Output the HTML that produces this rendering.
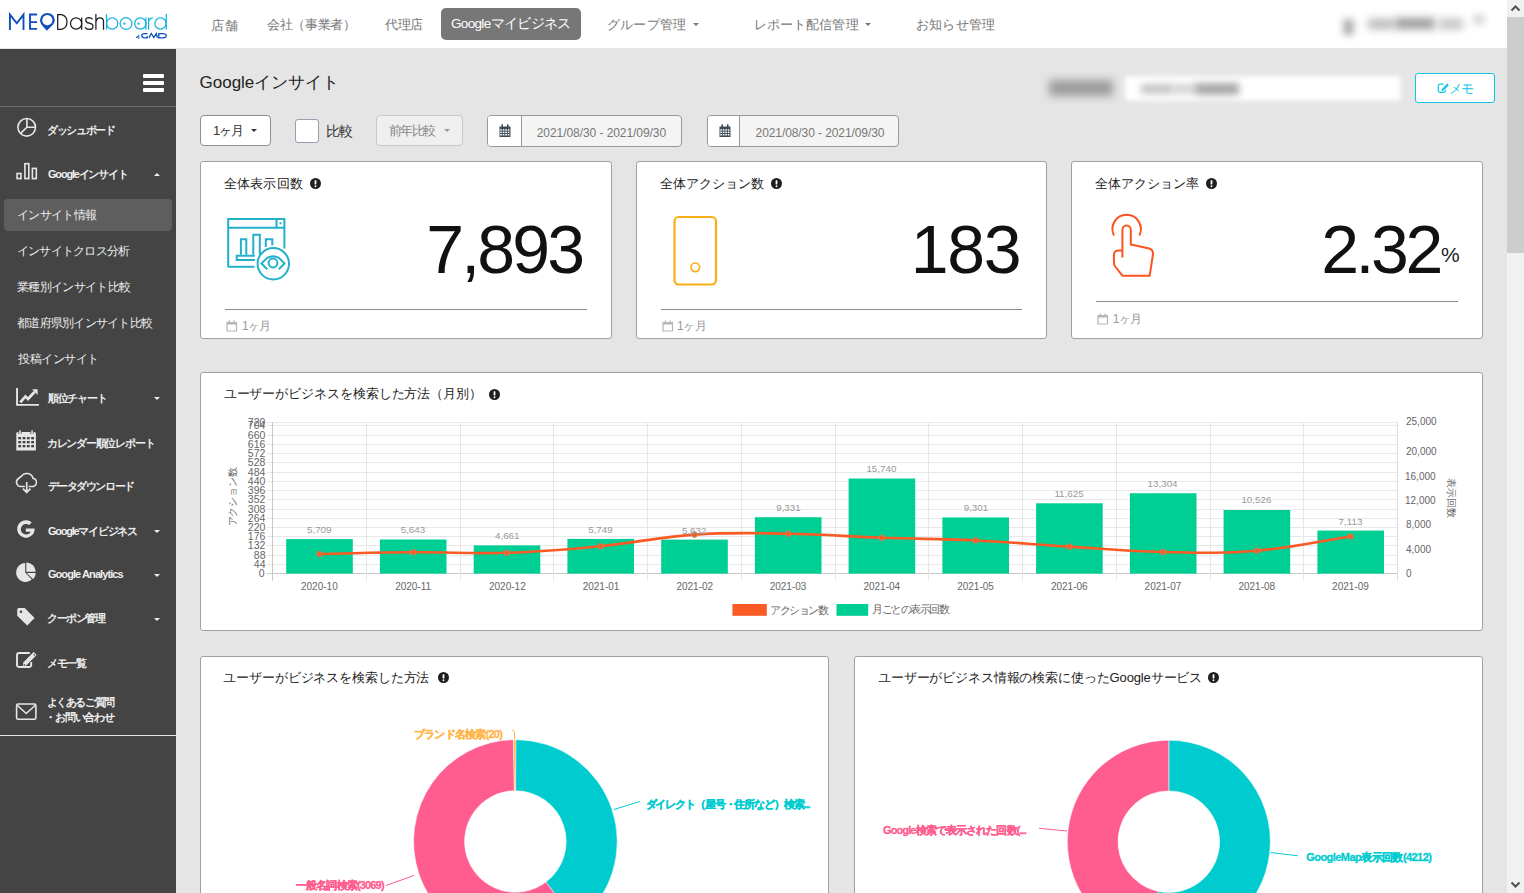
<!DOCTYPE html>
<html><head><meta charset="utf-8"><title>MEO Dashboard</title>
<style>
*{box-sizing:border-box;margin:0;padding:0}
html,body{width:1524px;height:893px;overflow:hidden;background:#e5e5e5;font-family:"Liberation Sans",sans-serif;position:relative}
.a{position:absolute;white-space:nowrap}
</style></head><body>
<div class="a" style="left:0;top:0;width:1507px;height:48px;background:#fff"></div>
<div class="a" style="left:441px;top:8px;width:140px;height:32px;background:#777;border-radius:5px"></div>
<div class="a" style="left:693px;top:23px;width:0;height:0;border-left:3px solid transparent;border-right:3px solid transparent;border-top:3px solid #777"></div>
<div class="a" style="left:865px;top:23px;width:0;height:0;border-left:3px solid transparent;border-right:3px solid transparent;border-top:3px solid #777"></div>
<div class="a" style="left:1343px;top:19px;width:11px;height:16px;background:#999;filter:blur(3.5px);opacity:.75"></div>
<div class="a" style="left:1368px;top:19px;width:26px;height:10px;background:#b8b8b8;filter:blur(4px)"></div>
<div class="a" style="left:1395px;top:18px;width:40px;height:11px;background:#9a9a9a;filter:blur(4px)"></div>
<div class="a" style="left:1439px;top:19px;width:24px;height:10px;background:#c0c0c0;filter:blur(4px)"></div>
<div class="a" style="left:1473px;top:14px;width:12px;height:11px;background:#ddd;filter:blur(3px)"></div>
<div class="a" style="left:0;top:48px;width:176px;height:1px;background:#e5e5e5"></div>
<div class="a" style="left:0;top:49px;width:176px;height:844px;background:#444"></div>
<div class="a" style="left:0;top:106px;width:176px;height:1px;background:#6b6e71"></div>
<div class="a" style="left:143px;top:74px;width:21px;height:4px;background:#fff;border-radius:1px"></div>
<div class="a" style="left:143px;top:81px;width:21px;height:4px;background:#fff;border-radius:1px"></div>
<div class="a" style="left:143px;top:88px;width:21px;height:4px;background:#fff;border-radius:1px"></div>
<div class="a" style="left:4px;top:199px;width:168px;height:32px;background:#5e5e5e;border-radius:4px"></div>
<div class="a" style="left:0;top:735px;width:176px;height:1px;background:#e5e5e5"></div>
<div class="a" style="left:154px;top:173px;width:0;height:0;border-left:3px solid transparent;border-right:3px solid transparent;border-bottom:3px solid #eee"></div>
<div class="a" style="left:154px;top:397px;width:0;height:0;border-left:3px solid transparent;border-right:3px solid transparent;border-top:3px solid #eee"></div>
<div class="a" style="left:154px;top:530px;width:0;height:0;border-left:3px solid transparent;border-right:3px solid transparent;border-top:3px solid #eee"></div>
<div class="a" style="left:154px;top:574px;width:0;height:0;border-left:3px solid transparent;border-right:3px solid transparent;border-top:3px solid #eee"></div>
<div class="a" style="left:154px;top:618px;width:0;height:0;border-left:3px solid transparent;border-right:3px solid transparent;border-top:3px solid #eee"></div>
<svg class="a" style="left:0;top:0" width="176" height="893" viewBox="0 0 176 893">
<g fill="none" stroke="#e6e6e6" stroke-width="1.6">
 <circle cx="26.7" cy="127.3" r="8.8"/>
 <path d="M26.9 118.5V127.3H35.5M26.9 127.3L20.6 133.4"/>
 <rect x="17.1" y="173.5" width="3.9" height="5.1"/><rect x="24.9" y="163.7" width="3.9" height="14.9"/><rect x="32.4" y="168.4" width="3.9" height="10.2"/>
 <path d="M17.05 388V404.9H38.9" stroke-width="1.9"/>
 <path d="M20.3 402.3L25.4 396.4L28 399L34.5 392" stroke-width="2.7" stroke-linejoin="miter"/>
 <path d="M21.6 486.5H20.8A4.3 4.3 0 0 1 18.6 478.5A8 8 0 0 1 21.5 476.2A6.4 6.4 0 0 1 33 478.3A4.2 4.2 0 0 1 33.2 486.5H28.6M24.8 486.5H21.6" stroke-width="1.5"/>
 <path d="M26.7 482V492.3M22.9 488.6L26.7 492.3L30.5 488.6" stroke-width="1.7"/>
 <path d="M29.8 653H19.1A2.1 2.1 0 0 0 17 655.1V664.9A2.1 2.1 0 0 0 19.1 667H29.1A2.1 2.1 0 0 0 31.2 664.9V662" stroke-width="1.9"/>
 <rect x="16.6" y="704" width="19.3" height="15.2" rx="1.5"/>
 <path d="M17 705L26.2 713.5L35.5 705"/>
</g>
<g fill="#e6e6e6">
 <path d="M32.1 389.3H37.6V394.9Z"/>
 <path d="M16.3 433.5a1.5 1.5 0 0 1 1.5-1.5H34.4a1.5 1.5 0 0 1 1.5 1.5V450.5H16.3Z"/>
 <path d="M33.6 652.1L36.6 655.1L26.2 665.5L22.8 666.3L23.3 662.5Z"/>
 <path d="M25.8 528.5H34.6A8.7 8.7 0 1 1 31.7 522.5L29.2 525A5.3 5.3 0 1 0 30.8 531.7H25.8Z"/>
 <path d="M25.2 563.1V572.6L31.8 579.5A9.4 9.4 0 1 1 25.2 563.1Z"/>
 <path d="M26.3 562.4A9.4 9.4 0 0 1 35.7 571.8H26.3Z"/>
 <path d="M26.8 572.9H35.7A9 9 0 0 1 33.2 579.3Z"/>
 <path d="M17.2 609.2V615.7L27.2 625.5L34.6 618L24.7 608H18.4Z"/>
</g>
<g fill="#444">
 <circle cx="21" cy="611.7" r="1.3"/>
 <path d="M33.9 653.9L35.3 655.3L34.6 656L33.2 654.6Z"/>
 <circle cx="24.3" cy="664.9" r=".8"/>
 <rect x="18.3" y="437" width="2.8" height="2.3"/><rect x="22.6" y="437" width="2.8" height="2.3"/><rect x="26.9" y="437" width="2.8" height="2.3"/><rect x="31.2" y="437" width="2.8" height="2.3"/>
 <rect x="18.3" y="441" width="2.8" height="2.3"/><rect x="22.6" y="441" width="2.8" height="2.3"/><rect x="26.9" y="441" width="2.8" height="2.3"/><rect x="31.2" y="441" width="2.8" height="2.3"/>
 <rect x="18.3" y="445" width="2.8" height="2.3"/><rect x="22.6" y="445" width="2.8" height="2.3"/><rect x="26.9" y="445" width="2.8" height="2.3"/><rect x="31.2" y="445" width="2.8" height="2.3"/>
 <rect x="18.5" y="430.2" width="3" height="3.8"/><rect x="30.5" y="430.2" width="3" height="3.8"/>
</g>
<g fill="#e6e6e6"><rect x="19.3" y="430.3" width="1.5" height="4"/><rect x="31.3" y="430.3" width="1.5" height="4"/></g>
</svg>
<div class="a" style="left:176px;top:48px;width:1331px;height:845px;background:#e5e5e5"></div>
<div class="a" style="left:1507px;top:0;width:17px;height:893px;background:#f1f1f1"></div>
<div class="a" style="left:1507px;top:17px;width:17px;height:236px;background:#cdcdcd"></div>
<svg class="a" style="left:1507px;top:0" width="17" height="893"><path d="M4.5 10.5L8.5 6.5L12.5 10.5" fill="none" stroke="#505050" stroke-width="2"/><path d="M4.5 882.5L8.5 886.5L12.5 882.5" fill="none" stroke="#505050" stroke-width="2"/></svg>
<div class="a" style="left:1049px;top:80px;width:64px;height:16px;background:#8a8a8a;filter:blur(4px);opacity:.8"></div>
<div class="a" style="left:1124px;top:75px;width:278px;height:27px;background:#fff;border:1px solid #d8d8d8;border-radius:3px;filter:blur(2.5px)"></div>
<div class="a" style="left:1141px;top:84px;width:32px;height:10px;background:#c4c4c4;filter:blur(3.5px)"></div>
<div class="a" style="left:1172px;top:84px;width:24px;height:10px;background:#d4d4d4;filter:blur(3.5px)"></div>
<div class="a" style="left:1195px;top:83px;width:44px;height:12px;background:#a8a8a8;filter:blur(3.5px)"></div>
<div class="a" style="left:1415px;top:73px;width:80px;height:30px;background:#fff;border:1px solid #0cc6e6;border-radius:3px"></div>
<svg class="a" style="left:1437px;top:83px" width="13" height="11"><path d="M6.5 1.2H3A1.7 1.7 0 0 0 1.3 2.9V7.6A1.7 1.7 0 0 0 3 9.3H6.7A1.7 1.7 0 0 0 8.4 7.6V6.8" fill="none" stroke="#0cc6e6" stroke-width="1.2"/><path d="M10.2 0.6L11.8 2.2L6.5 7.5L4.4 8.2L5 6Z" fill="#0cc6e6"/></svg>
<div class="a" style="left:200px;top:115px;width:71px;height:31px;background:#fff;border:1px solid #8f8f8f;border-radius:4px"></div>
<div class="a" style="left:251px;top:129px;width:0;height:0;border-left:3px solid transparent;border-right:3px solid transparent;border-top:3px solid #333"></div>
<div class="a" style="left:295px;top:119px;width:24px;height:24px;background:#fff;border:1px solid #9c9cb0;border-radius:3px"></div>
<div class="a" style="left:376px;top:115px;width:87px;height:31px;background:#efefef;border:1px solid #c8c8c8;border-radius:4px"></div>
<div class="a" style="left:443.5px;top:129px;width:0;height:0;border-left:3px solid transparent;border-right:3px solid transparent;border-top:3px solid #999"></div>
<div class="a" style="left:487px;top:115px;width:195px;height:32px;background:#f4f4f4;border:1px solid #999;border-radius:4px;overflow:hidden"><div style="position:absolute;left:0;top:0;width:34.39999999999998px;height:30px;background:#fff;border-right:1px solid #999"></div></div>
<svg class="a" style="left:499px;top:124px" width="12" height="14"><path d="M0.5 2.5H11.5V13H0.5Z" fill="#3d4b57"/><g fill="#fff"><rect x="1.3" y="5.2" width="1.6" height="1.5"/><rect x="3.8" y="5.2" width="1.6" height="1.5"/><rect x="6.3" y="5.2" width="1.6" height="1.5"/><rect x="8.8" y="5.2" width="1.6" height="1.5"/><rect x="1.3" y="7.6" width="1.6" height="1.5"/><rect x="3.8" y="7.6" width="1.6" height="1.5"/><rect x="6.3" y="7.6" width="1.6" height="1.5"/><rect x="8.8" y="7.6" width="1.6" height="1.5"/><rect x="1.3" y="10.0" width="1.6" height="1.5"/><rect x="3.8" y="10.0" width="1.6" height="1.5"/><rect x="6.3" y="10.0" width="1.6" height="1.5"/><rect x="8.8" y="10.0" width="1.6" height="1.5"/></g><rect x="2.5" y="0.3" width="1.5" height="3.5" fill="#3d4b57"/><rect x="8" y="0.3" width="1.5" height="3.5" fill="#3d4b57"/></svg>
<div class="a" style="left:706.6px;top:115px;width:192.89999999999998px;height:32px;background:#f4f4f4;border:1px solid #999;border-radius:4px;overflow:hidden"><div style="position:absolute;left:0;top:0;width:32.799999999999955px;height:30px;background:#fff;border-right:1px solid #999"></div></div>
<svg class="a" style="left:718.6px;top:124px" width="12" height="14"><path d="M0.5 2.5H11.5V13H0.5Z" fill="#3d4b57"/><g fill="#fff"><rect x="1.3" y="5.2" width="1.6" height="1.5"/><rect x="3.8" y="5.2" width="1.6" height="1.5"/><rect x="6.3" y="5.2" width="1.6" height="1.5"/><rect x="8.8" y="5.2" width="1.6" height="1.5"/><rect x="1.3" y="7.6" width="1.6" height="1.5"/><rect x="3.8" y="7.6" width="1.6" height="1.5"/><rect x="6.3" y="7.6" width="1.6" height="1.5"/><rect x="8.8" y="7.6" width="1.6" height="1.5"/><rect x="1.3" y="10.0" width="1.6" height="1.5"/><rect x="3.8" y="10.0" width="1.6" height="1.5"/><rect x="6.3" y="10.0" width="1.6" height="1.5"/><rect x="8.8" y="10.0" width="1.6" height="1.5"/></g><rect x="2.5" y="0.3" width="1.5" height="3.5" fill="#3d4b57"/><rect x="8" y="0.3" width="1.5" height="3.5" fill="#3d4b57"/></svg>
<div class="a" style="left:200px;top:161px;width:412px;height:178px;background:#fff;border:1px solid #a0a0a0;border-radius:3px"></div>
<div class="a" style="left:636px;top:161px;width:411px;height:178px;background:#fff;border:1px solid #a0a0a0;border-radius:3px"></div>
<div class="a" style="left:1071px;top:161px;width:411.5px;height:178px;background:#fff;border:1px solid #a0a0a0;border-radius:3px"></div>
<svg class="a" style="left:309.5px;top:178px" width="11" height="11"><circle cx="5.5" cy="5.5" r="5.5" fill="#1e1e1e"/><rect x="4.6" y="2.2" width="1.8" height="4.4" rx=".6" fill="#fff"/><circle cx="5.5" cy="8.3" r=".95" fill="#fff"/></svg>
<svg class="a" style="left:770.5px;top:178px" width="11" height="11"><circle cx="5.5" cy="5.5" r="5.5" fill="#1e1e1e"/><rect x="4.6" y="2.2" width="1.8" height="4.4" rx=".6" fill="#fff"/><circle cx="5.5" cy="8.3" r=".95" fill="#fff"/></svg>
<svg class="a" style="left:1206px;top:178px" width="11" height="11"><circle cx="5.5" cy="5.5" r="5.5" fill="#1e1e1e"/><rect x="4.6" y="2.2" width="1.8" height="4.4" rx=".6" fill="#fff"/><circle cx="5.5" cy="8.3" r=".95" fill="#fff"/></svg>
<div class="a" style="left:225px;top:309px;width:362px;height:1px;background:#8a8a8a"></div>
<div class="a" style="left:661px;top:309px;width:361px;height:1px;background:#8a8a8a"></div>
<div class="a" style="left:1096px;top:301px;width:362px;height:1px;background:#8a8a8a"></div>
<svg class="a" style="left:226px;top:320px" width="12" height="12"><path d="M1 2.5H10.5V11H1Z" fill="none" stroke="#b5b5b5" stroke-width="1.2"/><rect x="1" y="2.5" width="9.5" height="2" fill="#b5b5b5"/><rect x="2.8" y=".3" width="1.2" height="2.5" fill="#b5b5b5"/><rect x="7.5" y=".3" width="1.2" height="2.5" fill="#b5b5b5"/></svg>
<svg class="a" style="left:661.5px;top:320px" width="12" height="12"><path d="M1 2.5H10.5V11H1Z" fill="none" stroke="#b5b5b5" stroke-width="1.2"/><rect x="1" y="2.5" width="9.5" height="2" fill="#b5b5b5"/><rect x="2.8" y=".3" width="1.2" height="2.5" fill="#b5b5b5"/><rect x="7.5" y=".3" width="1.2" height="2.5" fill="#b5b5b5"/></svg>
<svg class="a" style="left:1097px;top:313px" width="12" height="12"><path d="M1 2.5H10.5V11H1Z" fill="none" stroke="#b5b5b5" stroke-width="1.2"/><rect x="1" y="2.5" width="9.5" height="2" fill="#b5b5b5"/><rect x="2.8" y=".3" width="1.2" height="2.5" fill="#b5b5b5"/><rect x="7.5" y=".3" width="1.2" height="2.5" fill="#b5b5b5"/></svg>
<svg class="a" style="left:220px;top:210px" width="80" height="80" viewBox="0 0 80 80"><g fill="none" stroke="#22b0cb" stroke-width="2">
<path d="M8.2 57V9.1H64.4V38.5"/><path d="M8.2 56.8H34.5"/><path d="M8.2 17.7H64.4"/><path d="M56.5 9.5V17.5"/>
<path d="M20.9 44.8V29.2H26.3V44.8M33.3 44.8V24.7H39.8V44.8M45.8 37V29.2H52.3V35.2"/>
<path d="M34.8 45.8H16.7V50H34.8"/>
<circle cx="53.3" cy="53.8" r="15.7"/>
<path d="M47.2 59.3L41.5 53.4L47.2 47.8Q53 44.5 58.8 47.8L64.5 53.4L58.8 59.3" />
<circle cx="53" cy="53" r="4.4"/>
</g><rect x="59.5" y="12.3" width="2" height="2" fill="#22b0cb"/></svg>
<svg class="a" style="left:665px;top:205px" width="65" height="85"><g fill="none" stroke="#fbad18" stroke-width="2.2">
<rect x="9.5" y="12" width="41.5" height="67.5" rx="4.2"/><circle cx="30.3" cy="62.3" r="4.3" stroke-width="1.7"/></g></svg>
<svg class="a" style="left:1100px;top:205px" width="65" height="85"><g fill="none" stroke="#fc5420" stroke-width="2" stroke-linejoin="round">
<path d="M14 30.5A14.2 14.2 0 1 1 39.3 30.5"/>
<path d="M22.4 52.4V24.6A4.2 4.2 0 0 1 30.8 24.6V39.4L49.3 43.5Q53.2 44.8 53 49L49.7 70.7H22.4L14.8 61Q13.7 59 13.9 54V49.5Q14.5 45.5 18.5 45.5H22.3"/>
</g></svg>
<div class="a" style="left:200px;top:371.5px;width:1282.5px;height:259.0px;background:#fff;border:1px solid #a0a0a0;border-radius:3px"></div>
<svg class="a" style="left:488.5px;top:388.5px" width="11" height="11"><circle cx="5.5" cy="5.5" r="5.5" fill="#1e1e1e"/><rect x="4.6" y="2.2" width="1.8" height="4.4" rx=".6" fill="#fff"/><circle cx="5.5" cy="8.3" r=".95" fill="#fff"/></svg>
<svg class="a" style="left:0;top:0" width="1524" height="893">
<line x1="266.6" y1="573.5" x2="1397.5" y2="573.5" stroke="#c8c8c8" stroke-width="1"/>
<line x1="266.6" y1="564.5" x2="1397.5" y2="564.5" stroke="#e8e8e8" stroke-width="1"/>
<line x1="266.6" y1="555.5" x2="1397.5" y2="555.5" stroke="#e8e8e8" stroke-width="1"/>
<line x1="266.6" y1="545.5" x2="1397.5" y2="545.5" stroke="#e8e8e8" stroke-width="1"/>
<line x1="266.6" y1="536.5" x2="1397.5" y2="536.5" stroke="#e8e8e8" stroke-width="1"/>
<line x1="266.6" y1="527.5" x2="1397.5" y2="527.5" stroke="#e8e8e8" stroke-width="1"/>
<line x1="266.6" y1="518.5" x2="1397.5" y2="518.5" stroke="#e8e8e8" stroke-width="1"/>
<line x1="266.6" y1="509.5" x2="1397.5" y2="509.5" stroke="#e8e8e8" stroke-width="1"/>
<line x1="266.6" y1="499.5" x2="1397.5" y2="499.5" stroke="#e8e8e8" stroke-width="1"/>
<line x1="266.6" y1="490.5" x2="1397.5" y2="490.5" stroke="#e8e8e8" stroke-width="1"/>
<line x1="266.6" y1="481.5" x2="1397.5" y2="481.5" stroke="#e8e8e8" stroke-width="1"/>
<line x1="266.6" y1="472.5" x2="1397.5" y2="472.5" stroke="#e8e8e8" stroke-width="1"/>
<line x1="266.6" y1="462.5" x2="1397.5" y2="462.5" stroke="#e8e8e8" stroke-width="1"/>
<line x1="266.6" y1="453.5" x2="1397.5" y2="453.5" stroke="#e8e8e8" stroke-width="1"/>
<line x1="266.6" y1="444.5" x2="1397.5" y2="444.5" stroke="#e8e8e8" stroke-width="1"/>
<line x1="266.6" y1="435.5" x2="1397.5" y2="435.5" stroke="#e8e8e8" stroke-width="1"/>
<line x1="266.6" y1="425.5" x2="1397.5" y2="425.5" stroke="#e8e8e8" stroke-width="1"/>
<line x1="266.6" y1="422.5" x2="1397.5" y2="422.5" stroke="#e8e8e8" stroke-width="1"/>
<line x1="272.5" y1="422.5" x2="272.5" y2="580.6" stroke="#c8c8c8" stroke-width="1"/>
<line x1="366.5" y1="422.5" x2="366.5" y2="580.6" stroke="#e6e6e6" stroke-width="1"/>
<line x1="460.5" y1="422.5" x2="460.5" y2="580.6" stroke="#e6e6e6" stroke-width="1"/>
<line x1="553.5" y1="422.5" x2="553.5" y2="580.6" stroke="#e6e6e6" stroke-width="1"/>
<line x1="647.5" y1="422.5" x2="647.5" y2="580.6" stroke="#e6e6e6" stroke-width="1"/>
<line x1="741.5" y1="422.5" x2="741.5" y2="580.6" stroke="#e6e6e6" stroke-width="1"/>
<line x1="835.5" y1="422.5" x2="835.5" y2="580.6" stroke="#e6e6e6" stroke-width="1"/>
<line x1="928.5" y1="422.5" x2="928.5" y2="580.6" stroke="#e6e6e6" stroke-width="1"/>
<line x1="1022.5" y1="422.5" x2="1022.5" y2="580.6" stroke="#e6e6e6" stroke-width="1"/>
<line x1="1116.5" y1="422.5" x2="1116.5" y2="580.6" stroke="#e6e6e6" stroke-width="1"/>
<line x1="1210.5" y1="422.5" x2="1210.5" y2="580.6" stroke="#e6e6e6" stroke-width="1"/>
<line x1="1303.5" y1="422.5" x2="1303.5" y2="580.6" stroke="#e6e6e6" stroke-width="1"/>
<line x1="1397.5" y1="422.5" x2="1397.5" y2="580.6" stroke="#dcdcdc" stroke-width="1"/>
<rect x="286.2" y="539.1" width="66.6" height="34.5" fill="#00cf95"/>
<rect x="379.9" y="539.5" width="66.6" height="34.1" fill="#00cf95"/>
<rect x="473.7" y="545.4" width="66.6" height="28.2" fill="#00cf95"/>
<rect x="567.4" y="538.9" width="66.6" height="34.7" fill="#00cf95"/>
<rect x="661.2" y="539.6" width="66.6" height="34.0" fill="#00cf95"/>
<rect x="754.9" y="517.2" width="66.6" height="56.4" fill="#00cf95"/>
<rect x="848.6" y="478.5" width="66.6" height="95.1" fill="#00cf95"/>
<rect x="942.4" y="517.4" width="66.6" height="56.2" fill="#00cf95"/>
<rect x="1036.1" y="503.3" width="66.6" height="70.3" fill="#00cf95"/>
<rect x="1129.9" y="493.2" width="66.6" height="80.4" fill="#00cf95"/>
<rect x="1223.6" y="510.0" width="66.6" height="63.6" fill="#00cf95"/>
<rect x="1317.4" y="530.6" width="66.6" height="43.0" fill="#00cf95"/>
<path d="M319.5 554.0 C357.0 553.3 375.7 552.5 413.2 552.3 C450.7 552.1 469.5 554.0 507.0 552.8 C544.5 551.6 563.3 549.8 600.7 546.2 C638.3 542.6 656.8 537.1 694.4 534.6 C731.8 532.1 750.7 533.1 788.2 533.7 C825.7 534.3 844.4 536.4 881.9 537.8 C919.4 539.2 938.2 538.7 975.7 540.5 C1013.2 542.3 1031.9 544.3 1069.4 546.6 C1106.9 548.9 1125.6 551.2 1163.1 552.0 C1200.6 552.8 1219.6 553.8 1256.9 550.7 C1294.6 547.6 1313.1 542.2 1350.6 536.5" fill="none" stroke="#fa5a24" stroke-width="2.6"/>
<circle cx="319.5" cy="554.0" r="2.8" fill="#f0602a" stroke="#c9885a" stroke-width="1"/>
<circle cx="413.2" cy="552.3" r="2.8" fill="#f0602a" stroke="#c9885a" stroke-width="1"/>
<circle cx="507.0" cy="552.8" r="2.8" fill="#f0602a" stroke="#c9885a" stroke-width="1"/>
<circle cx="600.7" cy="546.2" r="2.8" fill="#f0602a" stroke="#c9885a" stroke-width="1"/>
<circle cx="694.4" cy="534.6" r="2.8" fill="#f0602a" stroke="#c9885a" stroke-width="1"/>
<circle cx="788.2" cy="533.7" r="2.8" fill="#f0602a" stroke="#c9885a" stroke-width="1"/>
<circle cx="881.9" cy="537.8" r="2.8" fill="#f0602a" stroke="#c9885a" stroke-width="1"/>
<circle cx="975.7" cy="540.5" r="2.8" fill="#f0602a" stroke="#c9885a" stroke-width="1"/>
<circle cx="1069.4" cy="546.6" r="2.8" fill="#f0602a" stroke="#c9885a" stroke-width="1"/>
<circle cx="1163.1" cy="552.0" r="2.8" fill="#f0602a" stroke="#c9885a" stroke-width="1"/>
<circle cx="1256.9" cy="550.7" r="2.8" fill="#f0602a" stroke="#c9885a" stroke-width="1"/>
<circle cx="1350.6" cy="536.5" r="2.8" fill="#f0602a" stroke="#c9885a" stroke-width="1"/>
<rect x="732.4" y="604" width="34.4" height="11.8" fill="#fa5a24"/><rect x="836.5" y="604" width="31.7" height="11.8" fill="#00cf95"/>
</svg>
<div class="a" style="left:233.3px;top:497.2px;transform:translate(-50%,-50%) rotate(-90deg);font-size:10px;color:#666;letter-spacing:-0.2px">アクション数</div>
<div class="a" style="left:1451px;top:498px;transform:translate(-50%,-50%) rotate(90deg);font-size:10px;color:#666;letter-spacing:-0.1px">表示回数</div>
<div class="a" style="left:200px;top:655.5px;width:628.5px;height:244.5px;background:#fff;border:1px solid #a0a0a0;border-radius:3px"></div>
<div class="a" style="left:853.5px;top:655.5px;width:629.0px;height:244.5px;background:#fff;border:1px solid #a0a0a0;border-radius:3px"></div>
<svg class="a" style="left:437.5px;top:672px" width="11" height="11"><circle cx="5.5" cy="5.5" r="5.5" fill="#1e1e1e"/><rect x="4.6" y="2.2" width="1.8" height="4.4" rx=".6" fill="#fff"/><circle cx="5.5" cy="8.3" r=".95" fill="#fff"/></svg>
<svg class="a" style="left:1208px;top:672px" width="11" height="11"><circle cx="5.5" cy="5.5" r="5.5" fill="#1e1e1e"/><rect x="4.6" y="2.2" width="1.8" height="4.4" rx=".6" fill="#fff"/><circle cx="5.5" cy="8.3" r=".95" fill="#fff"/></svg>
<svg class="a" style="left:0;top:0" width="1524" height="893"><path d="M515.40 739.70 A101.8 101.8 0 0 1 576.66 922.80 L545.97 882.07 A50.8 50.8 0 0 0 515.40 790.70Z" fill="#00ccd0" stroke="#fff" stroke-width="0.5"/><path d="M576.66 922.80 A101.8 101.8 0 1 1 513.45 739.72 L514.42 790.71 A50.8 50.8 0 1 0 545.97 882.07Z" fill="#ff5d8f" stroke="#fff" stroke-width="0.5"/><path d="M513.45 739.72 A101.8 101.8 0 0 1 515.93 739.70 L515.67 790.70 A50.8 50.8 0 0 0 514.42 790.71Z" fill="#ffb74d" stroke="#fff" stroke-width="0.5"/><path d="M1168.80 740.20 A101.5 101.5 0 1 1 1147.70 940.98 L1158.24 891.39 A50.8 50.8 0 1 0 1168.80 790.90Z" fill="#00ccd0" stroke="#fff" stroke-width="0.5"/><path d="M1147.70 940.98 A101.5 101.5 0 0 1 1168.80 740.20 L1168.80 790.90 A50.8 50.8 0 0 0 1158.24 891.39Z" fill="#ff5d8f" stroke="#fff" stroke-width="0.5"/><path d="M514.5 739V731.5Q514.5 730.5 512 730.5" fill="none" stroke="#ffb74d" stroke-width="1"/><path d="M614 809.5L640 801.5" fill="none" stroke="#00ccd0" stroke-width="1"/><path d="M386 885.5L414 875.5" fill="none" stroke="#ff5d8f" stroke-width="1"/><path d="M1039 828.3L1067 831" fill="none" stroke="#ff5d8f" stroke-width="1"/><path d="M1270.5 852.5L1298 855.8" fill="none" stroke="#00ccd0" stroke-width="1"/></svg>
<svg class="a" style="left:0;top:0" width="180" height="48"><g fill="none" stroke="#0e4fc0" stroke-width="1.9" stroke-linejoin="miter">
<path d="M9.9 29.9V14.6L16.8 23.3L23.5 14.6V29.9"/>
<path d="M37.1 14.5H30V28.9H37.1M30 22.1H37"/>
</g>
<path d="M47.4 12.9A7.4 7.4 0 0 0 40 20.3C40 24 44.2 27.8 46.9 30.8C49.8 27.8 54.8 24 54.8 20.3A7.4 7.4 0 0 0 47.4 12.9ZM47.4 15.1A5.1 5.1 0 1 1 47.3 15.1Z" fill="#0e4fc0" fill-rule="evenodd"/>
<g fill="none" stroke="#1e1e1e" stroke-width="1.25">
<path d="M57.7 14.7H61.6A7 7.5 0 0 1 61.6 29.3H57.7Z"/>
<circle cx="76.1" cy="23.5" r="5.6"/><path d="M81.7 17.4V29.7"/>
<path d="M92.6 19.3Q91.4 17.6 89 17.6Q85.6 17.7 85.8 20.3Q86.1 22.5 89.3 23.2Q93.2 24 93 26.6Q92.8 29.4 89.2 29.4Q86.2 29.4 85.1 27.4"/>
<path d="M95.9 14.1V29.7M95.9 22.4Q96.6 17.8 99.9 17.8Q103.5 17.8 103.5 21.6V29.7"/>
</g>
<g fill="none" stroke="#14b4dc" stroke-width="1.25">
<path d="M106.5 14.1V29.7"/><circle cx="112.2" cy="23.5" r="5.6"/>
<circle cx="126" cy="23.5" r="5.9"/>
<circle cx="140.3" cy="23.5" r="5.6"/><path d="M145.9 17.4V29.7"/>
<path d="M148.6 29.7V17.6M148.6 21.8Q149.4 17.8 152.9 17.8"/>
<circle cx="160.5" cy="23.5" r="5.6"/><path d="M166.3 14.1V29.7"/>
</g>
<g fill="#14b4dc"><circle cx="124.4" cy="23.7" r="1.1"/><circle cx="138.6" cy="23.7" r="1.1"/></g>
<g fill="none" stroke="#0e4fc0" stroke-width="1.3">
<path d="M147.5 33.6H144.5Q141.8 33.6 141.8 35.6Q141.8 37.8 144.5 37.8H147.2V35.9"/>
<path d="M149 37.9L151.3 33.5L153.8 37.5L156.3 33.5L157.5 37.9"/>
<path d="M162.5 33.6H158.8V37.8H162.5Q166.2 37.8 166.2 35.7Q166.2 33.6 162.5 33.6"/>
</g>
<path d="M136 37.8L139.2 35.4M138.3 38.7L139.3 37.4" stroke="#0e4fc0" stroke-width="1.2"/>
</svg>
<div class="a" style="left:211.0px;top:16.5px;font-size:13px;font-weight:normal;letter-spacing:1.00px;color:#777;line-height:normal;">店舗</div>
<div class="a" style="left:267.0px;top:16.0px;font-size:13px;font-weight:normal;letter-spacing:-0.33px;color:#777;line-height:normal;">会社（事業者）</div>
<div class="a" style="left:385.0px;top:16.0px;font-size:13px;font-weight:normal;letter-spacing:-0.50px;color:#777;line-height:normal;">代理店</div>
<div class="a" style="left:607.0px;top:16.0px;font-size:13px;font-weight:normal;letter-spacing:0.20px;color:#777;line-height:normal;">グループ管理</div>
<div class="a" style="left:753.9px;top:15.5px;font-size:13px;font-weight:normal;letter-spacing:0.10px;color:#777;line-height:normal;">レポート配信管理</div>
<div class="a" style="left:916.3px;top:15.5px;font-size:13px;font-weight:normal;letter-spacing:0.10px;color:#777;line-height:normal;">お知らせ管理</div>
<div class="a" style="left:451.0px;top:15.4px;font-size:13.5px;font-weight:normal;letter-spacing:-0.67px;color:#fff;line-height:normal;">Googleマイビジネス</div>
<div class="a" style="left:47.0px;top:122.8px;font-size:11px;font-weight:bold;letter-spacing:-1.33px;color:#eee;line-height:normal;">ダッシュボード</div>
<div class="a" style="left:48.0px;top:166.9px;font-size:11px;font-weight:bold;letter-spacing:-1.20px;color:#eee;line-height:normal;">Googleインサイト</div>
<div class="a" style="left:47.8px;top:391.1px;font-size:11px;font-weight:bold;letter-spacing:-1.18px;color:#eee;line-height:normal;">順位チャート</div>
<div class="a" style="left:46.8px;top:435.6px;font-size:11px;font-weight:bold;letter-spacing:-1.22px;color:#eee;line-height:normal;">カレンダー順位レポート</div>
<div class="a" style="left:47.8px;top:479.1px;font-size:11px;font-weight:bold;letter-spacing:-1.47px;color:#eee;line-height:normal;">データダウンロード</div>
<div class="a" style="left:47.9px;top:523.5px;font-size:11px;font-weight:bold;letter-spacing:-1.24px;color:#eee;line-height:normal;">Googleマイビジネス</div>
<div class="a" style="left:47.9px;top:567.7px;font-size:11px;font-weight:bold;letter-spacing:-0.91px;color:#eee;line-height:normal;">Google Analytics</div>
<div class="a" style="left:46.9px;top:610.6px;font-size:11px;font-weight:bold;letter-spacing:-1.38px;color:#eee;line-height:normal;">クーポン管理</div>
<div class="a" style="left:46.9px;top:655.5px;font-size:11px;font-weight:bold;letter-spacing:-1.37px;color:#eee;line-height:normal;">メモ一覧</div>
<div class="a" style="left:46.9px;top:695.2px;font-size:11px;font-weight:bold;letter-spacing:-1.47px;color:#eee;line-height:normal;">よくあるご質問</div>
<div class="a" style="left:44.9px;top:710.0px;font-size:11px;font-weight:bold;letter-spacing:-1.13px;color:#eee;line-height:normal;">・お問い合わせ</div>
<div class="a" style="left:17.0px;top:207.0px;font-size:12px;font-weight:normal;letter-spacing:-0.67px;color:#eee;line-height:normal;">インサイト情報</div>
<div class="a" style="left:17.0px;top:243.0px;font-size:12px;font-weight:normal;letter-spacing:-0.78px;color:#eee;line-height:normal;">インサイトクロス分析</div>
<div class="a" style="left:17.0px;top:279.1px;font-size:12px;font-weight:normal;letter-spacing:-0.67px;color:#eee;line-height:normal;">業種別インサイト比較</div>
<div class="a" style="left:17.0px;top:315.1px;font-size:12px;font-weight:normal;letter-spacing:-0.73px;color:#eee;line-height:normal;">都道府県別インサイト比較</div>
<div class="a" style="left:18.0px;top:350.8px;font-size:12px;font-weight:normal;letter-spacing:-0.50px;color:#eee;line-height:normal;">投稿インサイト</div>
<div class="a" style="left:199.6px;top:71.1px;font-size:17px;font-weight:normal;letter-spacing:-0.03px;color:#222;line-height:normal;">Googleインサイト</div>
<div class="a" style="left:1449.3px;top:80.0px;font-size:13px;font-weight:normal;letter-spacing:-1.40px;color:#0cc6e6;line-height:normal;">メモ</div>
<div class="a" style="left:213.0px;top:122.2px;font-size:13px;font-weight:normal;letter-spacing:-1.00px;color:#333;line-height:normal;">1ヶ月</div>
<div class="a" style="left:326.0px;top:122.9px;font-size:14px;font-weight:normal;letter-spacing:-0.60px;color:#333;line-height:normal;">比較</div>
<div class="a" style="left:389.0px;top:122.0px;font-size:13px;font-weight:normal;letter-spacing:-1.67px;color:#888;line-height:normal;">前年比較</div>
<div class="a" style="left:536.7px;top:125.7px;font-size:12px;font-weight:normal;letter-spacing:-0.06px;color:#777;line-height:normal;">2021/08/30 - 2021/09/30</div>
<div class="a" style="left:755.6px;top:125.7px;font-size:12px;font-weight:normal;letter-spacing:-0.09px;color:#777;line-height:normal;">2021/08/30 - 2021/09/30</div>
<div class="a" style="left:224.0px;top:175.4px;font-size:13px;font-weight:normal;letter-spacing:0.16px;color:#222;line-height:normal;">全体表示回数</div>
<div class="a" style="left:659.7px;top:174.9px;font-size:13px;font-weight:normal;letter-spacing:0.09px;color:#222;line-height:normal;">全体アクション数</div>
<div class="a" style="left:1095.2px;top:175.4px;font-size:13px;font-weight:normal;letter-spacing:0.01px;color:#222;line-height:normal;">全体アクション率</div>
<div class="a" style="left:426.2px;top:209.8px;font-size:68px;font-weight:normal;letter-spacing:-2.80px;color:#111;line-height:normal;">7,893</div>
<div class="a" style="left:910.8px;top:209.8px;font-size:68px;font-weight:normal;letter-spacing:-1.40px;color:#111;line-height:normal;">183</div>
<div class="a" style="left:1321.2px;top:209.9px;font-size:68px;font-weight:normal;letter-spacing:-3.40px;color:#111;line-height:normal;">2.32</div>
<div class="a" style="left:1441.0px;top:243.4px;font-size:21px;font-weight:normal;color:#222;line-height:normal;">%</div>
<div class="a" style="left:242.0px;top:317.9px;font-size:12px;font-weight:normal;letter-spacing:-0.65px;color:#999;line-height:normal;">1ヶ月</div>
<div class="a" style="left:677.0px;top:317.9px;font-size:12px;font-weight:normal;letter-spacing:-0.35px;color:#999;line-height:normal;">1ヶ月</div>
<div class="a" style="left:1112.8px;top:310.9px;font-size:12px;font-weight:normal;letter-spacing:-0.50px;color:#999;line-height:normal;">1ヶ月</div>
<div class="a" style="left:223.6px;top:385.2px;font-size:13px;font-weight:normal;letter-spacing:-0.08px;color:#222;line-height:normal;">ユーザーがビジネスを検索した方法（月別）</div>
<div class="a" style="left:258.8px;top:567.2px;font-size:10.5px;font-weight:normal;color:#666;line-height:normal;">0</div>
<div class="a" style="left:253.8px;top:557.9px;font-size:10.5px;font-weight:normal;color:#666;line-height:normal;">44</div>
<div class="a" style="left:253.8px;top:548.7px;font-size:10.5px;font-weight:normal;color:#666;line-height:normal;">88</div>
<div class="a" style="left:247.8px;top:539.4px;font-size:10.5px;font-weight:normal;color:#666;line-height:normal;">132</div>
<div class="a" style="left:247.8px;top:530.2px;font-size:10.5px;font-weight:normal;color:#666;line-height:normal;">176</div>
<div class="a" style="left:247.8px;top:521.0px;font-size:10.5px;font-weight:normal;color:#666;line-height:normal;">220</div>
<div class="a" style="left:247.8px;top:511.7px;font-size:10.5px;font-weight:normal;color:#666;line-height:normal;">264</div>
<div class="a" style="left:247.8px;top:502.5px;font-size:10.5px;font-weight:normal;color:#666;line-height:normal;">308</div>
<div class="a" style="left:247.8px;top:493.3px;font-size:10.5px;font-weight:normal;color:#666;line-height:normal;">352</div>
<div class="a" style="left:247.8px;top:484.0px;font-size:10.5px;font-weight:normal;color:#666;line-height:normal;">396</div>
<div class="a" style="left:247.8px;top:474.8px;font-size:10.5px;font-weight:normal;color:#666;line-height:normal;">440</div>
<div class="a" style="left:247.8px;top:465.6px;font-size:10.5px;font-weight:normal;color:#666;line-height:normal;">484</div>
<div class="a" style="left:247.8px;top:456.3px;font-size:10.5px;font-weight:normal;color:#666;line-height:normal;">528</div>
<div class="a" style="left:247.8px;top:447.1px;font-size:10.5px;font-weight:normal;color:#666;line-height:normal;">572</div>
<div class="a" style="left:247.8px;top:437.9px;font-size:10.5px;font-weight:normal;color:#666;line-height:normal;">616</div>
<div class="a" style="left:247.8px;top:428.6px;font-size:10.5px;font-weight:normal;color:#666;line-height:normal;">660</div>
<div class="a" style="left:247.8px;top:419.4px;font-size:10.5px;font-weight:normal;color:#666;line-height:normal;">704</div>
<div class="a" style="left:247.8px;top:416.1px;font-size:10.5px;font-weight:normal;color:#666;line-height:normal;">720</div>
<div class="a" style="left:1406.0px;top:567.8px;font-size:10px;font-weight:normal;color:#666;line-height:normal;">0</div>
<div class="a" style="left:1406.0px;top:543.6px;font-size:10px;font-weight:normal;color:#666;line-height:normal;">4,000</div>
<div class="a" style="left:1406.0px;top:519.4px;font-size:10px;font-weight:normal;color:#666;line-height:normal;">8,000</div>
<div class="a" style="left:1405.0px;top:494.7px;font-size:10px;font-weight:normal;color:#666;line-height:normal;">12,000</div>
<div class="a" style="left:1405.0px;top:470.5px;font-size:10px;font-weight:normal;color:#666;line-height:normal;">16,000</div>
<div class="a" style="left:1406.0px;top:446.4px;font-size:10px;font-weight:normal;color:#666;line-height:normal;">20,000</div>
<div class="a" style="left:1406.0px;top:416.1px;font-size:10px;font-weight:normal;color:#666;line-height:normal;">25,000</div>
<div class="a" style="left:301.0px;top:581.2px;font-size:10px;font-weight:normal;color:#666;line-height:normal;">2020-10</div>
<div class="a" style="left:395.2px;top:581.2px;font-size:10px;font-weight:normal;color:#666;line-height:normal;">2020-11</div>
<div class="a" style="left:489.0px;top:581.2px;font-size:10px;font-weight:normal;color:#666;line-height:normal;">2020-12</div>
<div class="a" style="left:582.7px;top:581.2px;font-size:10px;font-weight:normal;color:#666;line-height:normal;">2021-01</div>
<div class="a" style="left:676.4px;top:581.2px;font-size:10px;font-weight:normal;color:#666;line-height:normal;">2021-02</div>
<div class="a" style="left:769.7px;top:581.2px;font-size:10px;font-weight:normal;color:#666;line-height:normal;">2021-03</div>
<div class="a" style="left:863.4px;top:581.2px;font-size:10px;font-weight:normal;color:#666;line-height:normal;">2021-04</div>
<div class="a" style="left:957.2px;top:581.2px;font-size:10px;font-weight:normal;color:#666;line-height:normal;">2021-05</div>
<div class="a" style="left:1050.9px;top:581.2px;font-size:10px;font-weight:normal;color:#666;line-height:normal;">2021-06</div>
<div class="a" style="left:1144.6px;top:581.2px;font-size:10px;font-weight:normal;color:#666;line-height:normal;">2021-07</div>
<div class="a" style="left:1238.4px;top:581.2px;font-size:10px;font-weight:normal;color:#666;line-height:normal;">2021-08</div>
<div class="a" style="left:1332.1px;top:581.2px;font-size:10px;font-weight:normal;color:#666;line-height:normal;">2021-09</div>
<div class="a" style="left:307.0px;top:524.0px;font-size:9.8px;font-weight:normal;color:#999;line-height:normal;">5,709</div>
<div class="a" style="left:400.7px;top:524.4px;font-size:9.8px;font-weight:normal;color:#999;line-height:normal;">5,643</div>
<div class="a" style="left:495.0px;top:530.3px;font-size:9.8px;font-weight:normal;color:#999;line-height:normal;">4,661</div>
<div class="a" style="left:588.2px;top:523.8px;font-size:9.8px;font-weight:normal;color:#999;line-height:normal;">5,749</div>
<div class="a" style="left:681.9px;top:524.5px;font-size:9.8px;font-weight:normal;color:#999;line-height:normal;">5,632</div>
<div class="a" style="left:776.2px;top:502.1px;font-size:9.8px;font-weight:normal;color:#999;line-height:normal;">9,331</div>
<div class="a" style="left:866.4px;top:462.9px;font-size:9.8px;font-weight:normal;color:#999;line-height:normal;">15,740</div>
<div class="a" style="left:963.7px;top:502.3px;font-size:9.8px;font-weight:normal;color:#999;line-height:normal;">9,301</div>
<div class="a" style="left:1054.4px;top:488.2px;font-size:9.8px;font-weight:normal;color:#999;line-height:normal;">11,625</div>
<div class="a" style="left:1147.6px;top:477.6px;font-size:9.8px;font-weight:normal;color:#999;line-height:normal;">13,304</div>
<div class="a" style="left:1241.4px;top:494.4px;font-size:9.8px;font-weight:normal;color:#999;line-height:normal;">10,526</div>
<div class="a" style="left:1338.6px;top:515.5px;font-size:9.8px;font-weight:normal;color:#999;line-height:normal;">7,113</div>
<div class="a" style="left:770.0px;top:602.8px;font-size:11px;font-weight:normal;letter-spacing:-1.44px;color:#666;line-height:normal;">アクション数</div>
<div class="a" style="left:872.0px;top:602.3px;font-size:11px;font-weight:normal;letter-spacing:-1.43px;color:#666;line-height:normal;">月ごとの表示回数</div>
<div class="a" style="left:223.4px;top:668.8px;font-size:13px;font-weight:normal;letter-spacing:-0.13px;color:#222;line-height:normal;">ユーザーがビジネスを検索した方法</div>
<div class="a" style="left:877.9px;top:668.8px;font-size:13px;font-weight:normal;letter-spacing:-0.13px;color:#222;line-height:normal;">ユーザーがビジネス情報の検索に使ったGoogleサービス</div>
<div class="a" style="left:414.0px;top:727.2px;font-size:11px;font-weight:bold;letter-spacing:-0.77px;color:#ffb74d;line-height:normal;-webkit-text-stroke:0.3px">ブランド名検索(20)</div>
<div class="a" style="left:645.5px;top:796.7px;font-size:11px;font-weight:bold;letter-spacing:-1.12px;color:#00ccd0;line-height:normal;-webkit-text-stroke:0.3px">ダイレクト（屋号・住所など）検索...</div>
<div class="a" style="left:295.8px;top:878.4px;font-size:11px;font-weight:bold;letter-spacing:-0.82px;color:#ff5d8f;line-height:normal;-webkit-text-stroke:0.3px">一般名詞検索(3069)</div>
<div class="a" style="left:883.0px;top:823.2px;font-size:11px;font-weight:bold;letter-spacing:-0.89px;color:#ff5d8f;line-height:normal;-webkit-text-stroke:0.3px">Google検索で表示された回数(...</div>
<div class="a" style="left:1306.3px;top:849.5px;font-size:11px;font-weight:bold;letter-spacing:-0.56px;color:#00ccd0;line-height:normal;-webkit-text-stroke:0.3px">GoogleMap表示回数(4212)</div>
</body></html>
